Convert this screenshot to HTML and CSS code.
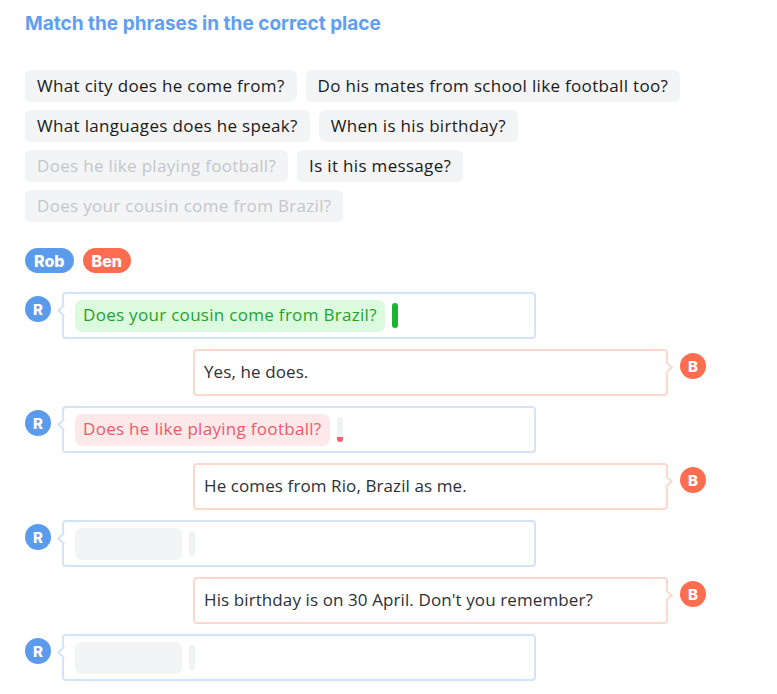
FILE: index.html
```html
<!DOCTYPE html>
<html>
<head>
<meta charset="utf-8">
<link rel="stylesheet" href="styles.css">
</head>
<body>
<div class="page">
  <h1 class="title">Match the phrases in the correct place</h1>
  <div class="bank">
    <span class="chip">What city does he come from?</span>
    <span class="chip">Do his mates from school like football too?</span>
    <span class="chip">What languages does he speak?</span>
    <span class="chip">When is his birthday?</span>
    <span class="chip used">Does he like playing football?</span>
    <span class="chip">Is it his message?</span>
    <span class="chip used">Does your cousin come from Brazil?</span>
  </div>
  <div class="legend">
    <span class="tag rob">Rob</span>
    <span class="tag ben">Ben</span>
  </div>
  <div class="chat">
    <div class="row left">
      <span class="avatar rob">R</span>
      <div class="bubble q">
        <span class="slot correct">Does your cousin come from Brazil?</span>
        <span class="bar correct"></span>
      </div>
    </div>
    <div class="row right">
      <div class="bubble a">Yes, he does.</div>
      <span class="avatar ben">B</span>
    </div>
    <div class="row left">
      <span class="avatar rob">R</span>
      <div class="bubble q">
        <span class="slot wrong">Does he like playing football?</span>
        <span class="bar wrong"></span>
      </div>
    </div>
    <div class="row right">
      <div class="bubble a">He comes from Rio, Brazil as me.</div>
      <span class="avatar ben">B</span>
    </div>
    <div class="row left">
      <span class="avatar rob">R</span>
      <div class="bubble q">
        <span class="slot empty"></span>
        <span class="bar"></span>
      </div>
    </div>
    <div class="row right">
      <div class="bubble a">His birthday is on 30 April. Don't you remember?</div>
      <span class="avatar ben">B</span>
    </div>
    <div class="row left">
      <span class="avatar rob">R</span>
      <div class="bubble q">
        <span class="slot empty"></span>
        <span class="bar"></span>
      </div>
    </div>
  </div>
</div>
</body>
</html>
```
FILE: styles.css
```css
* { box-sizing: border-box; }
body {
  margin: 0;
  background: #fff;
  font-family: "Open Sans", "Noto Sans", sans-serif;
  color: #222;
}
.page {
  padding: 12px 25px 0 25px;
  width: 720px;
}
.title {
  margin: 0;
  font-family: Inter, "Open Sans", sans-serif;
  font-weight: 700;
  font-size: 19px;
  line-height: 24px;
  color: #5f9ef0;
}
.bank {
  margin-top: 34px;
  display: flex;
  flex-wrap: wrap;
  gap: 8px 9px;
  width: 670px;
}
.chip {
  display: inline-flex;
  align-items: center;
  height: 32px;
  padding: 0 12px 2px;
  background: #f3f4f6;
  border-radius: 6px;
  font-size: 17px;
  letter-spacing: 0.32px;
  color: #1a1a1a;
  white-space: nowrap;
}
.chip.used { color: #c4c6ca; }
.legend {
  margin-top: 26px;
  display: flex;
  gap: 9px;
}
.tag {
  display: inline-flex;
  align-items: center;
  height: 25px;
  padding: 0 9px;
  border-radius: 13px;
  color: #fff;
  font-family: Inter, sans-serif;
  font-weight: 800;
  font-size: 16px;
}
.rob { background: #5b9bec; }
.ben { background: #ff6d50; }
.chat {
  margin-top: 19px;
  display: flex;
  flex-direction: column;
  gap: 10px;
  width: 681px;
}
.row {
  display: flex;
  align-items: flex-start;
  gap: 11px;
}
.row.right { justify-content: flex-end; gap: 12px; }
.avatar {
  flex: none;
  width: 26px;
  height: 26px;
  border-radius: 50%;
  margin-top: 4px;
  display: flex;
  align-items: center;
  justify-content: center;
  color: #fff;
  font-family: Inter, sans-serif;
  font-weight: 800;
  font-size: 15px;
}
.bubble {
  position: relative;
  height: 47px;
  width: 474px;
  border: 2px solid;
  border-radius: 4px;
  display: flex;
  align-items: center;
  background: #fff;
}
.bubble.q {
  border-color: #d3e3f8;
  padding: 0 11px;
  gap: 7px;
}
.bubble.a {
  border-color: #fcd8cf;
  padding: 0 9px 2px;
  width: 475px;
  font-size: 17px;
  letter-spacing: 0.1px;
  color: #2d3038;
}
.bubble::before {
  content: "";
  position: absolute;
  top: 12px;
  width: 7px;
  height: 7px;
  background: #fff;
  transform: rotate(45deg);
}
.bubble.q::before {
  left: -5px;
  border-left: 2px solid #d3e3f8;
  border-bottom: 2px solid #d3e3f8;
}
.bubble.a::before {
  right: -5px;
  border-right: 2px solid #fcd8cf;
  border-top: 2px solid #fcd8cf;
}
.slot {
  height: 32px;
  display: inline-flex;
  align-items: center;
  padding: 0 8px 2px;
  border-radius: 7px;
  font-size: 17px;
  letter-spacing: 0.3px;
  white-space: nowrap;
}
.slot.correct { background: #dcfade; color: #1fa32e; }
.slot.wrong { background: #fde8ea; color: #f0596a; }
.slot.empty { background: #f3f4f6; width: 107px; }
.bar {
  width: 6px;
  height: 25px;
  border-radius: 3px;
  background: #f1f2f4;
}
.bar.correct { background: #1fb333; }
.bar.wrong { background: linear-gradient(#f1f2f4 0 20px, #f4616c 20px); }
```
